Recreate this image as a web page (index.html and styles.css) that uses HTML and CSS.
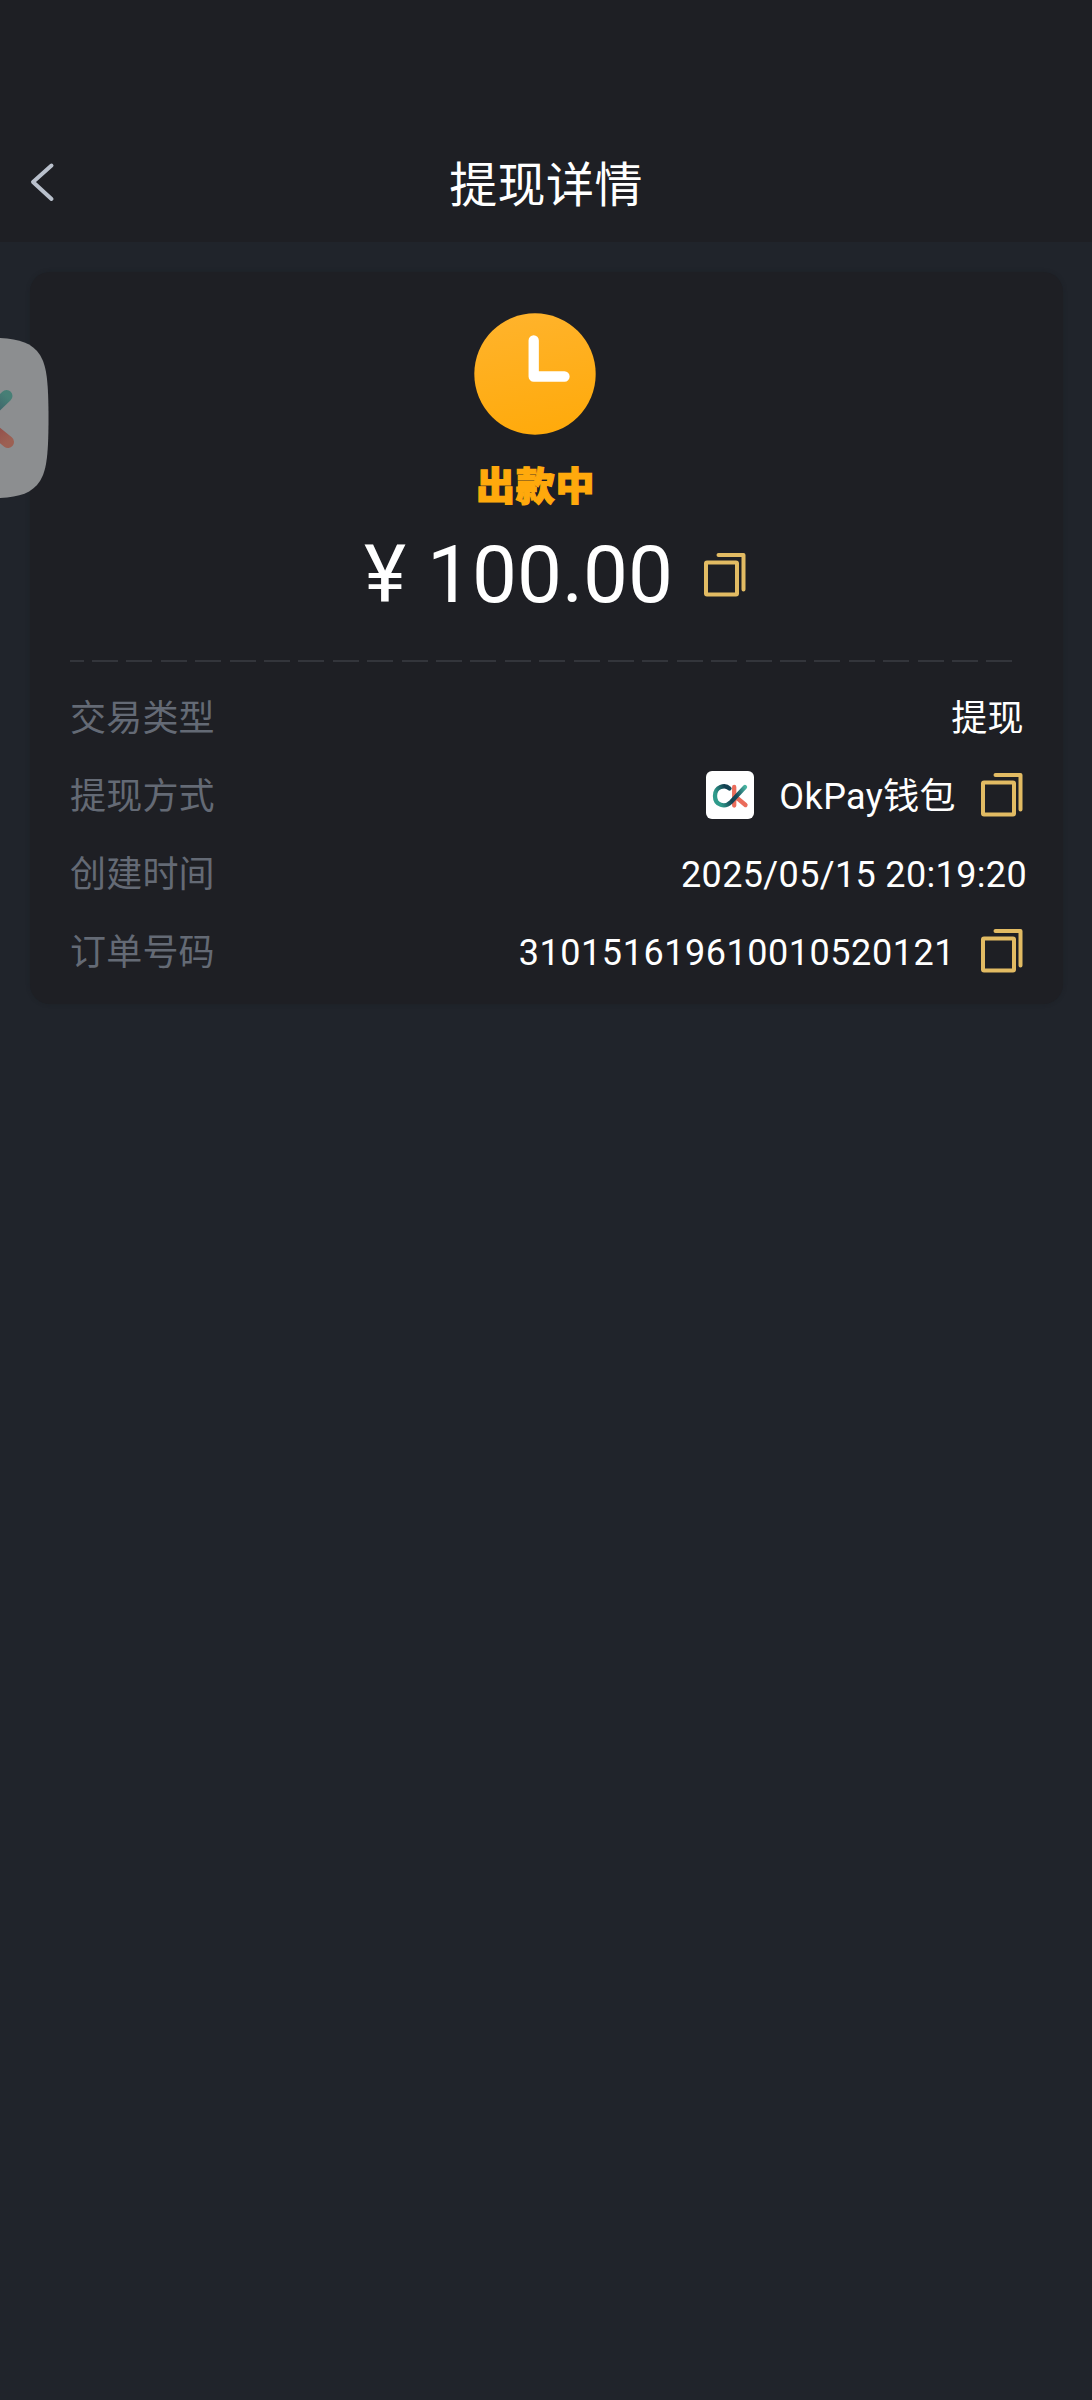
FILE: index.html
```
<!DOCTYPE html>
<html lang="zh-CN">
<head>
<meta charset="utf-8">
<title>提现详情</title>
<link rel="stylesheet" href="styles.css">
</head>
<body>
<svg class="defs" width="0" height="0">
  <symbol id="copy" viewBox="0 0 42 44">
    <path d="M14.500 2H39.500V36.500" /><rect x="2" y="9.500" width="31" height="32" rx="1" />
  </symbol>
</svg>
<header class="header">
  <svg class="back" width="28" height="40" viewBox="0 0 28 40"><path d="M21.500 3.500 3 20 21.500 37"/></svg>
  <h1 class="title">提现详情</h1>
</header>
<main class="card">
  <section class="summary">
    <svg class="clock" width="122" height="122" viewBox="0 0 122 122">
      <defs><linearGradient id="amber" x1="0.4" y1="0" x2="0.6" y2="1"><stop offset="0" stop-color="#ffb32b"/><stop offset="1" stop-color="#ffaa0b"/></linearGradient></defs>
      <circle cx="61" cy="61" r="60.700" fill="url(#amber)"/>
      <path d="M59.700 27.500V63.500H90.500" fill="none" stroke="#fff" stroke-width="10.300" stroke-linecap="round" stroke-linejoin="round"/>
    </svg>
    <div class="status">出款中</div>
    <div class="amount"><span class="currency">¥</span><span class="value">100.00</span><svg class="copy"><use href="#copy"/></svg></div>
  </section>
  <div class="divider"></div>
  <dl class="details">
    <div class="row"><dt>交易类型</dt><dd class="type">提现</dd></div>
    <div class="row"><dt>提现方式</dt><dd>
      <svg class="wallet" width="48" height="48" viewBox="0 0 48 48">
        <defs>
          <linearGradient id="teal" x1="0" y1="0.3" x2="1" y2="0"><stop offset="0" stop-color="#2f9b8b"/><stop offset="0.38" stop-color="#123f50"/><stop offset="0.6" stop-color="#16495a"/><stop offset="1" stop-color="#48b3a0"/></linearGradient>
        </defs>
        <rect width="48" height="48" rx="6" fill="#fff"/>
        <g fill="none" stroke-width="4.300" stroke-linecap="round">
          <path d="M28.200 16V34.500M30.500 26.500 39.500 34" stroke="#ea6c5b"/>
          <path d="M23.500 17.500C19 13 9 15.500 9 25C9 34.500 19 37 25 31L39 16" stroke="url(#teal)"/>
        </g>
      </svg>
      <span class="method">OkPay钱包</span><svg class="copy"><use href="#copy"/></svg></dd></div>
    <div class="row"><dt>创建时间</dt><dd class="time">2025/05/15 20:19:20</dd></div>
    <div class="row"><dt>订单号码</dt><dd><span class="order">310151619610010520121</span><svg class="copy"><use href="#copy"/></svg></dd></div>
  </dl>
</main>
<svg class="float" width="49" height="160" viewBox="0 0 49 160">
  <defs>
    <linearGradient id="arm" x1="0" y1="1" x2="1" y2="0"><stop offset="0" stop-color="#3d5f68"/><stop offset="1" stop-color="#477f76"/></linearGradient>
    <linearGradient id="leg" x1="0" y1="0" x2="1" y2="1"><stop offset="0" stop-color="#914d49"/><stop offset="1" stop-color="#9c6053"/></linearGradient>
  </defs>
  <path d="M0 0C20 1 32 5 40 17C46 27 48.500 40 48.500 80C48.500 120 46 133 40 143C32 155 20 159 0 160Z" fill="#8c8e90"/>
  <g fill="none" stroke-width="12" stroke-linecap="round"><path d="M-8 72 6.500 58" stroke="url(#arm)"/><path d="M-8 91 8 104" stroke="url(#leg)"/></g>
</svg>
</body>
</html>
```
FILE: styles.css
```
* { box-sizing: border-box; }
body {
  margin: 0;
  min-height: 2400px;
  background: #20242b;
  color: #fff;
  font-family: Roboto, "Noto Sans CJK SC", sans-serif;
  font-size: 36px;
  letter-spacing: 0.4px;
}
.defs { display: block; }
.header {
  display: grid;
  grid-template-columns: 120px 1fr 120px;
  align-items: center;
  height: 242px;
  padding: 122px 0 0;
  background: #1e1f24;
}
.back { margin: 0 0 0 30px; fill: none; stroke: #b9c0cc; stroke-width: 4; stroke-linecap: round; stroke-linejoin: round; }
.title { margin: 0; padding-top: 8px; text-align: center; font-size: 48px; line-height: 60px; font-weight: 400; }
.card {
  width: 1033px;
  height: 732px;
  margin: 30px 0 0 30px;
  padding: 41px 37px 0 40px;
  border-radius: 20px;
  background: #1e1f24;
  box-shadow: 0 0 4px rgba(24, 26, 31, 0.3);
}
.summary { display: flex; flex-direction: column; align-items: flex-start; }
.clock { margin-left: 404px; }
.status {
  margin: 22px 0 0 406px;
  font-size: 39px;
  line-height: 60px;
  letter-spacing: 0.8px;
  font-weight: 900;
  color: #ffa90c;
  -webkit-text-stroke: 1.2px #ffa90c;
}
.amount { display: flex; align-items: center; height: 100px; margin: 8px 0 0 294px; font-size: 80px; line-height: 100px; letter-spacing: 0; }
.currency { width: 63px; }
.value { width: 277px; }
.copy { flex: none; width: 42px; height: 44px; fill: none; stroke: #e2bb63; stroke-width: 4; stroke-linecap: round; stroke-linejoin: round; }
.divider {
  width: 951px;
  height: 2px;
  margin-top: 35px;
  background: repeating-linear-gradient(90deg, #33353b 0 26px, transparent 26px 34.4px) -12.4px 0 / 1100px 2px;
}
.details { margin: 18px 0 0; }
.row { display: flex; align-items: center; justify-content: space-between; height: 78px; line-height: 48px; }
dt { color: #646a75; letter-spacing: 0.2px; }
dd { display: flex; align-items: center; margin: 0; }
.type { padding-right: 2px; }
.time { margin-right: -1px; letter-spacing: 0.35px; }
.wallet { margin: 0 25px 4px 0; }
.method { margin-right: 25px; }
.order { margin-right: 26px; letter-spacing: 0.54px; }
.row .copy { margin: 0 3px 4px 0; }
.float { position: absolute; left: 0; top: 338px; }
```
